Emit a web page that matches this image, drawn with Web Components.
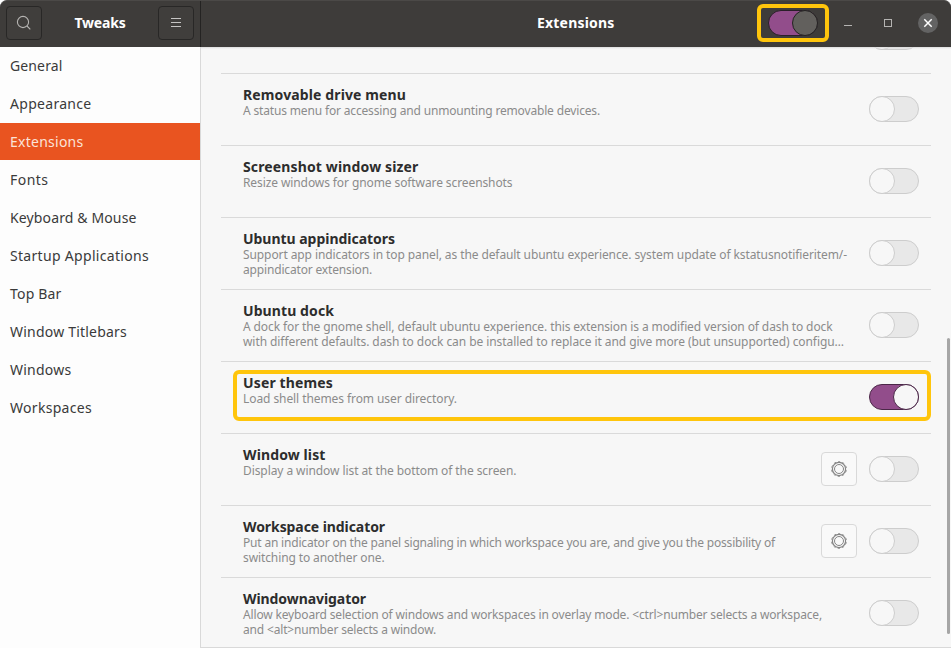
<!DOCTYPE html>
<html lang="en"><head><meta charset="utf-8"><title>Tweaks</title>
<style>html,body{margin:0;height:100%;overflow:hidden;background:#fff}body{font-family:"Noto Sans","Open Sans",sans-serif}</style></head>
<body><tweaks-window></tweaks-window>
<script>
const define = (name, html, setup) => {
  const t = document.createElement('template');
  t.innerHTML = html;
  customElements.define(name, class extends HTMLElement {
    constructor() { super(); this.attachShadow({mode: 'open'}).append(t.content.cloneNode(true)); }
    connectedCallback() { if (setup) setup(this, this.shadowRoot); }
  });
};

// One line of text, tracked so that it spans the width given in its "w" attribute.
define('fit-text', `<style>:host{display:block;white-space:pre;width:max-content}span{display:inline-block}</style><span><slot></slot></span>`, (el, root) => {
  const s = root.querySelector('span'), w = parseFloat(el.getAttribute('w'));
  requestAnimationFrame(() => {
    s.style.letterSpacing = '0px';
    s.style.letterSpacing = (w - s.getBoundingClientRect().width) / el.textContent.length + 'px';
  });
});

define('toggle-switch', `<style>
:host{display:block;flex:none;box-sizing:border-box;width:50px;height:26px;border:1px solid #cdcdcd;border-radius:13px;background:#e8e8e8}
i{display:block;box-sizing:border-box;width:26px;height:26px;margin:-1px;border:1px solid #cdcdcd;border-radius:50%;background:#f7f7f7}
:host([on]){background:#924d8b;border-color:#4b2748}
:host([on]) i{margin-left:23px;background:#f7f7f7;border-color:#4b2748}
:host([dark]){border-color:#2a1f29}
:host([dark]) i{background:#62605d;border-color:#242322}
</style><i></i>`);

define('header-button', `<style>:host{display:grid;place-items:center;box-sizing:border-box;width:36px;height:34px;border:1px solid #282726;border-radius:4px;background:#403e3c}</style><slot></slot>`);

define('gear-button', `<style>:host{display:grid;place-items:center;box-sizing:border-box;width:36px;height:34px;margin-right:12px;border:1px solid #d9d9d9;border-radius:4px;background:#f9f9f9}svg{display:block}</style>
<svg width="16" height="16" viewBox="0 0 16 16" fill="none" stroke="#858585"><circle cx="8" cy="8" r="4.5"/><circle cx="8" cy="8" r="6.6" stroke-width="1.2"/><circle cx="8" cy="8" r="7.4" stroke-width=".9" stroke-dasharray="2.4 2.25" stroke-dashoffset="1.2" transform="rotate(-90 8 8)"/></svg>`);

define('title-bar', `<style>
:host{display:flex;height:47px;flex:none;box-sizing:border-box;background:#3e3c3a;border-top:1px solid #4b4947;border-radius:7px 7px 0 0;color:#fff;font-weight:700;font-size:14px;line-height:20px}
.left{width:201px;box-sizing:border-box;padding:5px 6px 0;display:flex;justify-content:space-between;border-right:1px solid #242322;flex:none}
.left fit-text{margin-top:7px}
.right{flex:1;display:grid;grid-template-columns:556px 72px 1fr;align-items:start}
.name{margin:12px 0 0 336px}
.mark{display:grid;place-items:center;box-sizing:border-box;width:72px;height:38px;margin-top:3px;border:4px solid #ffc50c;border-radius:6px}
.controls{display:flex;padding:12px 0 0 12px}
.max{margin:0 23px 0 26px}
svg{display:block}
</style>
<div class="left"><header-button><svg width="16" height="16" viewBox="0 0 16 16" fill="none" stroke="#b5b4b2" stroke-width="1.1"><circle cx="7" cy="7" r="5.6"/><path d="M11 11l3.3 3.3"/></svg></header-button>
<fit-text w="51">Tweaks</fit-text>
<header-button><svg width="16" height="16" viewBox="0 0 16 16" stroke="#c5c4c3"><path d="M3 3.5h10M3 7.5h10M3 11.5h10"/></svg></header-button></div>
<div class="right"><fit-text class="name" w="77.5">Extensions</fit-text>
<div class="mark"><toggle-switch on dark></toggle-switch></div>
<div class="controls"><svg width="14" height="20" viewBox="0 0 14 20"><path d="M3 12.5h8" stroke="#b5b4b2"/></svg>
<svg class="max" width="14" height="20" viewBox="0 0 14 20"><rect x="3.5" y="6.5" width="7" height="7" fill="none" stroke="#b5b4b2"/></svg>
<svg width="20" height="20" viewBox="0 0 20 20"><circle cx="10" cy="10" r="10" fill="#636363"/><path d="M6.3 6.3l7.4 7.4m0-7.4l-7.4 7.4" stroke="#fff" stroke-width="1.5"/></svg></div></div>`);

define('nav-item', `<style>:host{display:block;height:37px;margin-bottom:1px;padding-left:10px;font-size:14px;line-height:38px;color:#3a3a3a}:host([selected]){background:#e95420;color:#fbe3d8}</style><slot></slot>`);

define('extension-row', `<style>
:host{display:flex;align-items:center;height:70px;border-top:1px solid #dadada;padding:0 12px 1px 22px}
.text{flex:1;align-self:start;padding-top:11px;min-width:0}
.title{font-size:14px;line-height:20px;font-weight:700;color:#2d2d2d}
.desc{font-size:12px;line-height:15px;color:#8b8b8b;margin-top:-2px}
</style><div class="text"><div class="title"><slot name="title"></slot></div><div class="desc"><slot></slot></div></div><slot name="action"></slot>`);

define('focus-frame', `<style>:host{position:absolute;left:233px;top:370px;width:698px;height:51px;box-sizing:border-box;border:4px solid #ffc50c;border-radius:6px;pointer-events:none}</style>`);

define('tweaks-window', `<style>
:host{display:flex;flex-direction:column;height:648px;width:951px;position:relative}
main{display:flex;flex:1;min-height:0}
nav{width:200px;flex:none;background:#fdfdfd}
section{flex:1;position:relative;box-sizing:border-box;height:601px;background:#f7f7f7;border-left:1px solid #d9d9d9;border-bottom:1px solid #d9d9d9;padding:0 20px;overflow:hidden}
.previous{height:26px;display:flex;justify-content:flex-end;padding-right:12px;box-sizing:border-box;overflow:hidden}
.previous toggle-switch{margin-top:-23px}
.bar{position:absolute;right:1px;top:291px;width:3px;height:296px;border-radius:2px;background:#a6a6a6}
.shade{position:absolute;left:0;right:0;top:0;height:2px;background:linear-gradient(#dcdcdc,#f7f7f700)}
</style><title-bar></title-bar><main><nav></nav><section><div class="shade"></div><div class="previous"><toggle-switch></toggle-switch></div><div class="rows"></div><div class="bar"></div></section></main><focus-frame></focus-frame>`, (el, root) => {
  const nav = [['General',52.5],['Appearance',81.5],['Extensions',73.5],['Fonts',38.5],['Keyboard & Mouse',126.5],['Startup Applications',139],['Top Bar',51.5],['Window Titlebars',117],['Windows',61.5],['Workspaces',82]];
  const rows = [
    ['Removable drive menu',163,[['A status menu for accessing and unmounting removable devices.',357]]],
    ['Screenshot window sizer',175.5,[['Resize windows for gnome software screenshots',269.5]]],
    ['Ubuntu appindicators',152,[['Support app indicators in top panel, as the default ubuntu experience. system update of kstatusnotifieritem/-',604],['appindicator extension.',129]]],
    ['Ubuntu dock',91,[['A dock for the gnome shell, default ubuntu experience. this extension is a modified version of dash to dock',589.5],['with different defaults. dash to dock can be installed to replace it and give more (but unsupported) configu…',601]]],
    ['User themes',90,[['Load shell themes from user directory.',214]],'on'],
    ['Window list',82.5,[['Display a window list at the bottom of the screen.',273.5]],'gear'],
    ['Workspace indicator',142,[['Put an indicator on the panel signaling in which workspace you are, and give you the possibility of',532],['switching to another one.',141.5]],'gear'],
    ['Windownavigator',123,[['Allow keyboard selection of windows and workspaces in overlay mode. <ctrl>number selects a workspace,',579],['and <alt>number selects a window.',193]]]
  ];
  const text = (s, w) => { const f = document.createElement('fit-text'); f.setAttribute('w', w); f.textContent = s; return f; };
  nav.forEach(([s, w]) => {
    const n = document.createElement('nav-item');
    if (s === 'Extensions') n.setAttribute('selected', '');
    n.append(text(s, w)); root.querySelector('nav').append(n);
  });
  rows.forEach(([s, w, lines, kind]) => {
    const r = document.createElement('extension-row'), t = text(s, w);
    t.slot = 'title'; r.append(t, ...lines.map(l => text(...l)));
    if (kind === 'gear') { const g = document.createElement('gear-button'); g.slot = 'action'; r.append(g); }
    const sw = document.createElement('toggle-switch'); sw.slot = 'action';
    if (kind === 'on') sw.setAttribute('on', '');
    r.append(sw); root.querySelector('.rows').append(r);
  });
});
</script></body></html>
